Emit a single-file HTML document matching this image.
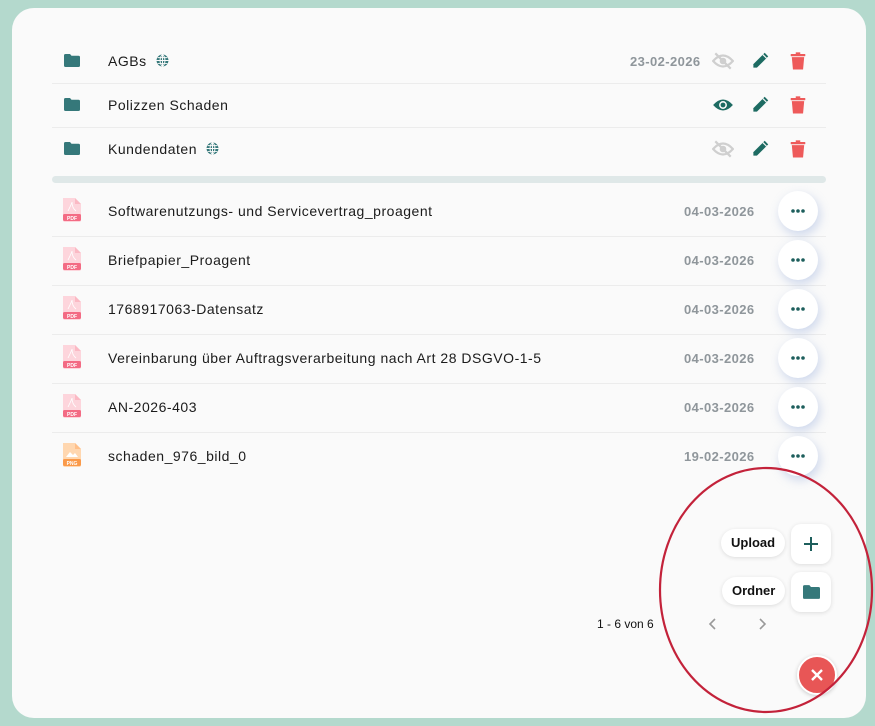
<!DOCTYPE html>
<html><head><meta charset="utf-8"><style>
body{margin:0;width:875px;height:726px;background:#b4d9cd;font-family:"Liberation Sans",sans-serif;position:relative;overflow:hidden}
.card{position:absolute;left:12px;top:8px;width:854px;height:710px;background:#fafafa;border-radius:22px}
.row{position:absolute;left:52px;width:774px;height:44px}
.sep{position:absolute;left:52px;width:774px;height:1px;background:#ececec}
.t{position:absolute;left:56px;top:0;line-height:44px;font-size:14px;color:#1b1b1b;letter-spacing:0.52px;white-space:nowrap}
.ic{position:absolute}
.date{position:absolute;font-size:13px;color:#8f969b;font-weight:bold;letter-spacing:0.4px}
.dots{position:absolute;left:778px;width:40px;height:40px;border-radius:50%;background:#fff;box-shadow:2px 4px 10px rgba(120,150,210,.35);text-align:center}
.pill{position:absolute;background:#fff;border-radius:14px;font-size:13px;font-weight:bold;color:#111;height:28px;line-height:28px;padding:0 10px;box-shadow:0 1px 4px rgba(0,0,0,.12)}
.sq{position:absolute;width:40px;height:40px;border-radius:10px;background:#fff;box-shadow:0 1px 5px rgba(0,0,0,.12)}
</style></head><body>
<div class="card"></div>
<svg width="0" height="0" style="position:absolute"><defs>
<symbol id="fold" viewBox="0 0 16 13"><path d="M0 1.5Q0 0 1.5 0H6L7.5 1.8H14.5Q16 1.8 16 3.3V11.5Q16 13 14.5 13H1.5Q0 13 0 11.5Z" fill="#35787a"/></symbol>
<symbol id="globe" viewBox="0 0 12 12"><circle cx="6" cy="6" r="5.5" fill="#35787a"/><path d="M0.5 6H11.5M6 .5V11.5M1.5 3.3H10.5M1.5 8.7H10.5M6 .5C3 3 3 9 6 11.5M6 .5C9 3 9 9 6 11.5" stroke="#fafafa" stroke-width=".9" fill="none"/></symbol>
<symbol id="pen" viewBox="0 0 16 16"><path d="M11.5 1.5l3 3L5 14H2v-3z" fill="#1d6b62"/><path d="M10 3l3 3" stroke="#fafafa" stroke-width="1"/></symbol>
<symbol id="trash" viewBox="0 0 14 16"><rect x="0.5" y="1.8" width="13" height="2" rx=".5" fill="#ee5a5a"/><rect x="5" y="0.3" width="4" height="2" fill="#ee5a5a"/><path d="M1.5 4.5h11l-1 11h-9z" fill="#ee5a5a"/></symbol>
<symbol id="eyeoff" viewBox="0 0 20 16"><path d="M1 8Q10 -2 19 8Q10 18 1 8Z" fill="none" stroke="#cfcfcf" stroke-width="2"/><circle cx="10" cy="8" r="3" fill="#cfcfcf"/><path d="M3 1L17 15" stroke="#cfcfcf" stroke-width="2"/></symbol>
<symbol id="eye" viewBox="0 0 20 14"><path d="M1 7Q10 -3 19 7Q10 17 1 7Z" fill="#1d6b62"/><circle cx="10" cy="7" r="3.6" fill="#fafafa"/><circle cx="10" cy="7" r="2.2" fill="#1d6b62"/></symbol>
<symbol id="pdf" viewBox="0 0 20 24"><path d="M1 0H13L19 6V22Q19 24 17 24H3Q1 24 1 22Z" fill="#fdd5dc"/><path d="M13 0V6H19" fill="#fbb9c4"/><rect x="1" y="16" width="18" height="7" rx="1.5" fill="#f36b84"/><text x="10" y="22" font-size="5" font-family="Liberation Sans" font-weight="bold" fill="#fff" text-anchor="middle">PDF</text><path d="M6 13Q10 5 10 4Q10 10 14 13" stroke="#fff" stroke-width=".8" fill="none"/></symbol>
<symbol id="png" viewBox="0 0 20 24"><path d="M1 0H13L19 6V22Q19 24 17 24H3Q1 24 1 22Z" fill="#ffd7b0"/><path d="M13 0V6H19" fill="#ffc08a"/><rect x="1" y="16" width="18" height="7" rx="1.5" fill="#fa9a4a"/><text x="10" y="22" font-size="5" font-family="Liberation Sans" font-weight="bold" fill="#fff" text-anchor="middle">PNG</text><path d="M4 14L8 9L11 12L13 10L16 14Z" fill="#fff"/></symbol>
</defs></svg>

<div class="row" style="top:39px"><svg class="ic" style="left:12px;top:15px" width="16" height="13"><use href="#fold" width="16" height="13"/></svg><div class="t">AGBs <svg width="13" height="13" style="margin-left:5px;vertical-align:-1px"><use href="#globe" width="13" height="13"/></svg></div>
<div class="date" style="left:578px;top:15px">23-02-2026</div>
<svg class="ic" style="left:660px;top:13px" width="22" height="18"><use href="#eyeoff" width="22" height="18"/></svg>
<svg class="ic" style="left:699px;top:12px" width="19" height="19"><use href="#pen" width="19" height="19"/></svg>
<svg class="ic" style="left:738px;top:13px" width="16" height="18"><use href="#trash" width="16" height="18"/></svg></div>
<div class="sep" style="top:83px"></div>
<div class="row" style="top:83px"><svg class="ic" style="left:12px;top:15px" width="16" height="13"><use href="#fold" width="16" height="13"/></svg><div class="t">Polizzen Schaden</div>
<svg class="ic" style="left:660px;top:14px" width="22" height="16"><use href="#eye" width="22" height="16"/></svg>
<svg class="ic" style="left:699px;top:12px" width="19" height="19"><use href="#pen" width="19" height="19"/></svg>
<svg class="ic" style="left:738px;top:13px" width="16" height="18"><use href="#trash" width="16" height="18"/></svg></div>
<div class="sep" style="top:127px"></div>
<div class="row" style="top:127px"><svg class="ic" style="left:12px;top:15px" width="16" height="13"><use href="#fold" width="16" height="13"/></svg><div class="t">Kundendaten <svg width="13" height="13" style="margin-left:5px;vertical-align:-1px"><use href="#globe" width="13" height="13"/></svg></div>
<svg class="ic" style="left:660px;top:13px" width="22" height="18"><use href="#eyeoff" width="22" height="18"/></svg>
<svg class="ic" style="left:699px;top:12px" width="19" height="19"><use href="#pen" width="19" height="19"/></svg>
<svg class="ic" style="left:738px;top:13px" width="16" height="18"><use href="#trash" width="16" height="18"/></svg></div>
<div style="position:absolute;left:52px;top:176px;width:774px;height:7px;border-radius:4px;background:#dfe8e8"></div>

<div class="row" style="top:189px"><svg class="ic" style="left:10px;top:9px" width="20" height="24"><use href="#pdf" width="20" height="24"/></svg><div class="t">Softwarenutzungs- und Servicevertrag_proagent</div></div>
<div class="row" style="top:238px"><svg class="ic" style="left:10px;top:9px" width="20" height="24"><use href="#pdf" width="20" height="24"/></svg><div class="t">Briefpapier_Proagent</div></div>
<div class="row" style="top:287px"><svg class="ic" style="left:10px;top:9px" width="20" height="24"><use href="#pdf" width="20" height="24"/></svg><div class="t">1768917063-Datensatz</div></div>
<div class="row" style="top:336px"><svg class="ic" style="left:10px;top:9px" width="20" height="24"><use href="#pdf" width="20" height="24"/></svg><div class="t">Vereinbarung über Auftragsverarbeitung nach Art 28 DSGVO-1-5</div></div>
<div class="row" style="top:385px"><svg class="ic" style="left:10px;top:9px" width="20" height="24"><use href="#pdf" width="20" height="24"/></svg><div class="t">AN-2026-403</div></div>
<div class="row" style="top:434px"><svg class="ic" style="left:10px;top:9px" width="20" height="24"><use href="#png" width="20" height="24"/></svg><div class="t">schaden_976_bild_0</div></div>
<div class="sep" style="top:236px"></div><div class="sep" style="top:285px"></div><div class="sep" style="top:334px"></div><div class="sep" style="top:383px"></div><div class="sep" style="top:432px"></div>

<div class="date" style="left:684px;top:204px">04-03-2026</div>
<div class="date" style="left:684px;top:253px">04-03-2026</div>
<div class="date" style="left:684px;top:302px">04-03-2026</div>
<div class="date" style="left:684px;top:351px">04-03-2026</div>
<div class="date" style="left:684px;top:400px">04-03-2026</div>
<div class="date" style="left:684px;top:449px">19-02-2026</div>
<div class="dots" style="top:191px"><svg width="14" height="40"><g fill="#1d5e5c"><circle cx="2" cy="20" r="1.8"/><circle cx="7" cy="20" r="1.8"/><circle cx="12" cy="20" r="1.8"/></g></svg></div>
<div class="dots" style="top:240px"><svg width="14" height="40"><g fill="#1d5e5c"><circle cx="2" cy="20" r="1.8"/><circle cx="7" cy="20" r="1.8"/><circle cx="12" cy="20" r="1.8"/></g></svg></div>
<div class="dots" style="top:289px"><svg width="14" height="40"><g fill="#1d5e5c"><circle cx="2" cy="20" r="1.8"/><circle cx="7" cy="20" r="1.8"/><circle cx="12" cy="20" r="1.8"/></g></svg></div>
<div class="dots" style="top:338px"><svg width="14" height="40"><g fill="#1d5e5c"><circle cx="2" cy="20" r="1.8"/><circle cx="7" cy="20" r="1.8"/><circle cx="12" cy="20" r="1.8"/></g></svg></div>
<div class="dots" style="top:387px"><svg width="14" height="40"><g fill="#1d5e5c"><circle cx="2" cy="20" r="1.8"/><circle cx="7" cy="20" r="1.8"/><circle cx="12" cy="20" r="1.8"/></g></svg></div>
<div class="dots" style="top:436px"><svg width="14" height="40"><g fill="#1d5e5c"><circle cx="2" cy="20" r="1.8"/><circle cx="7" cy="20" r="1.8"/><circle cx="12" cy="20" r="1.8"/></g></svg></div>

<div style="position:absolute;left:597px;top:617px;font-size:12px;color:#111">1 - 6 von 6</div>
<svg style="position:absolute;left:708px;top:617px" width="10" height="14"><path d="M7 2L2 7L7 12" stroke="#999" stroke-width="1.6" fill="none"/></svg>
<svg style="position:absolute;left:757px;top:617px" width="10" height="14"><path d="M3 2L8 7L3 12" stroke="#999" stroke-width="1.6" fill="none"/></svg>

<div class="pill" style="left:721px;top:529px">Upload</div>
<div class="sq" style="left:791px;top:524px"><svg width="40" height="40"><path d="M20 13V27M13 20H27" stroke="#1d5e5c" stroke-width="2"/></svg></div>
<div class="pill" style="left:722px;top:577px">Ordner</div>
<div class="sq" style="left:791px;top:572px"><svg width="40" height="40"><use href="#fold" x="12" y="13" width="17" height="14"/></svg></div>
<div style="position:absolute;left:797px;top:655px;width:36px;height:36px;border-radius:50%;background:#e85656;border:2px solid #fff;box-shadow:0 1px 4px rgba(0,0,0,.2)"><svg width="36" height="36"><path d="M13 13L23 23M23 13L13 23" stroke="#fff" stroke-width="2.4"/></svg></div>
<svg style="position:absolute;left:0;top:0" width="875" height="726"><ellipse cx="766" cy="590" rx="106" ry="122" fill="none" stroke="#c3223a" stroke-width="2.2"/></svg>
</body></html>
